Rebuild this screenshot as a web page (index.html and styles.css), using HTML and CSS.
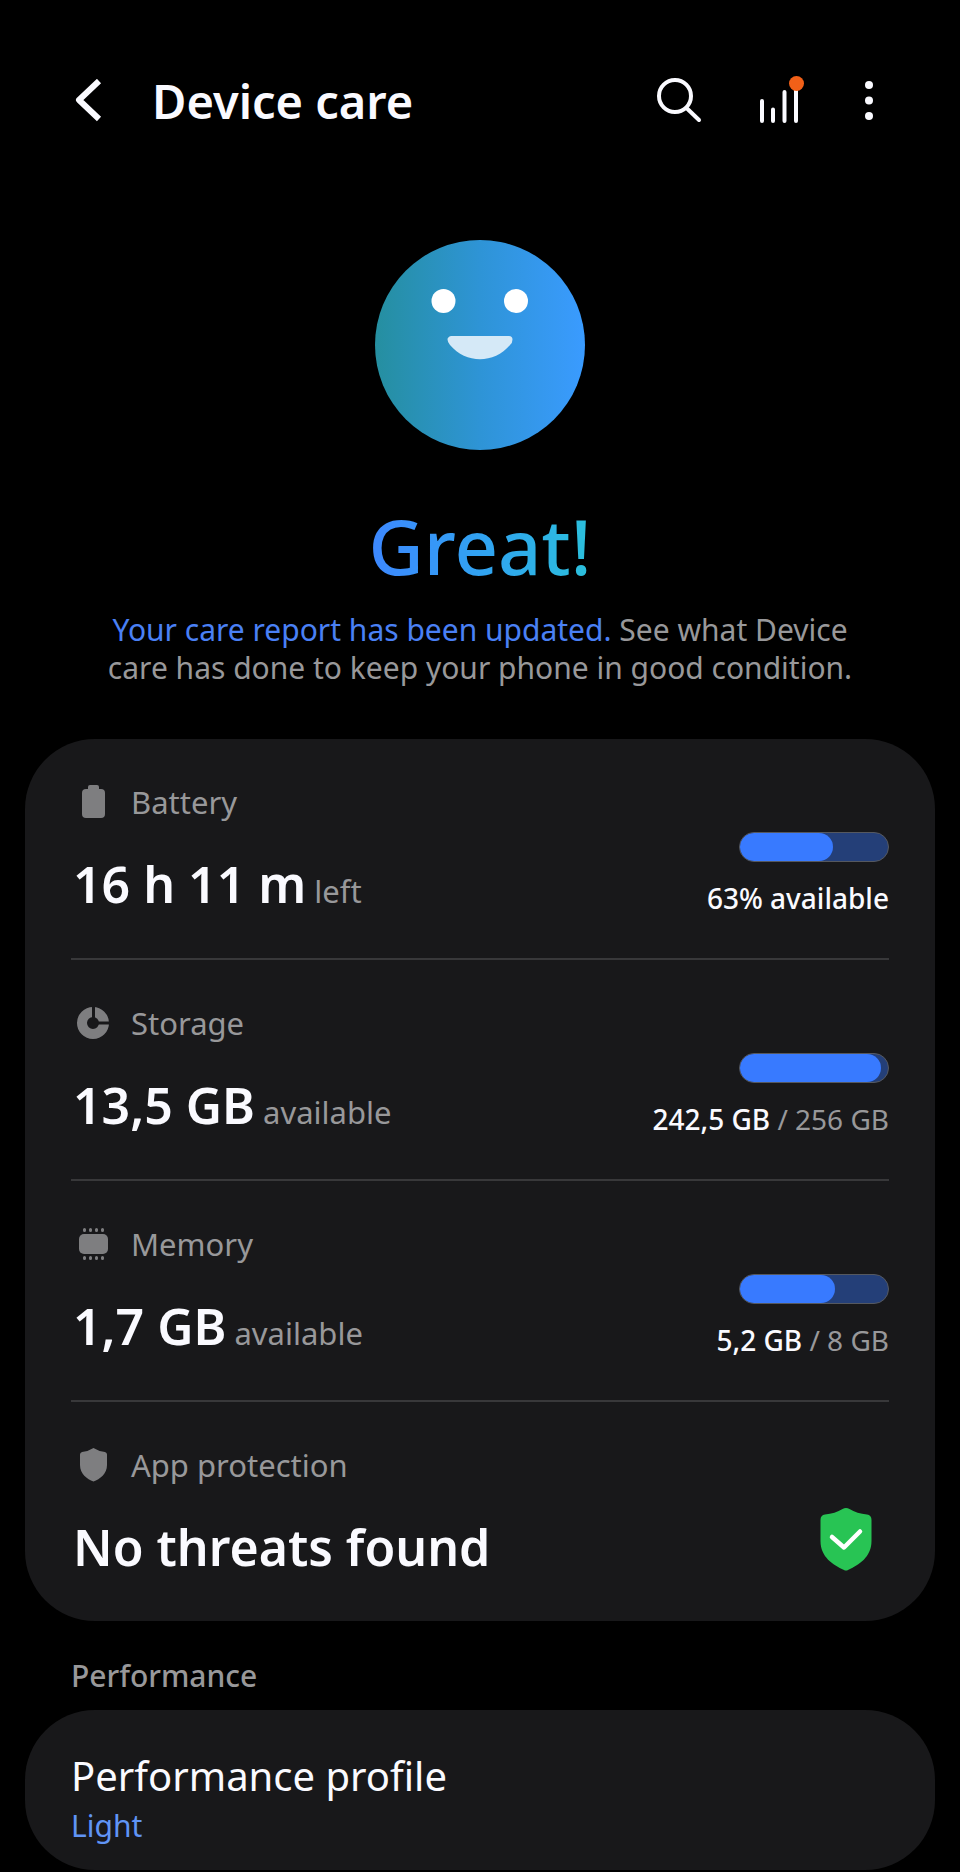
FILE: index.html
```html
<!DOCTYPE html>
<html lang="en">
<head>
<meta charset="UTF-8">
<meta name="viewport" content="width=device-width, initial-scale=1">
<title>Device care</title>
<link rel="stylesheet" href="styles.css">
</head>
<body>
<header class="topbar">
  <button class="icon-btn back" aria-label="Back">
    <svg width="30" height="44" viewBox="0 0 30 44" fill="none" stroke="#fafaff" stroke-width="6">
      <path d="M25 2 5 21 25 40" stroke-linejoin="round"/>
    </svg>
  </button>
  <h1 class="title">Device care</h1>
  <button class="icon-btn" aria-label="Search">
    <svg width="46" height="46" viewBox="0 0 46 46" fill="none" stroke="#fafaff" stroke-width="4" stroke-linecap="round">
      <circle cx="19" cy="18" r="16"/>
      <path d="M30.500 30 43 42"/>
    </svg>
  </button>
  <button class="icon-btn" aria-label="Care report">
    <svg width="46" height="50" viewBox="0 0 46 50" fill="none" stroke="#fafaff" stroke-width="4" stroke-linecap="round">
      <path d="M4 25V45M15 33.500V45M26.500 16V45M38 13V45"/>
      <circle cx="38.500" cy="7.500" r="7.500" fill="#f26018" stroke="none"/>
    </svg>
  </button>
  <button class="icon-btn more" aria-label="More options">
    <svg width="10" height="42" viewBox="0 0 10 42" fill="#fafaff">
      <circle cx="5" cy="5" r="4"/><circle cx="5" cy="20.500" r="4"/><circle cx="5" cy="36" r="4"/>
    </svg>
  </button>
</header>

<main>
  <section class="status">
    <svg class="face" width="210" height="210" viewBox="0 0 210 210">
      <defs>
        <linearGradient id="faceFill">
          <stop offset="0" stop-color="#258fa0"/>
          <stop offset=".5" stop-color="#2e94d6"/>
          <stop offset="1" stop-color="#3a9bff"/>
        </linearGradient>
      </defs>
      <circle cx="105" cy="105" r="105" fill="url(#faceFill)"/>
      <circle cx="68.500" cy="61" r="12" fill="#fff"/>
      <circle cx="141" cy="61" r="12" fill="#fff"/>
      <path d="M76 96H134Q137.500 96 137.500 99.500T135 105C119 124 91 124 75 105Q72.500 102 72.500 99.500T76 96Z" fill="#d5e9f7"/>
    </svg>
    <h2 class="grade">Great!</h2>
    <p class="report"><a href="#report">Your care report has been updated.</a> See what Device care has done to keep your phone in good condition.</p>
  </section>

  <section class="card">
    <div class="row">
      <div class="info">
        <h3 class="label">
          <svg class="label-icon" width="36" height="36" viewBox="0 0 36 36" fill="#7e7e80">
            <rect x="7" y="5" width="23" height="29" rx="4"/>
            <rect x="13" y="1" width="11" height="6" rx="2"/>
          </svg>
          Battery
        </h3>
        <p class="value">16 h 11 m <small>left</small></p>
      </div>
      <div class="usage">
        <div class="bar"><div class="fill" style="width: 63%"></div></div>
        <p class="caption">63% available</p>
      </div>
    </div>

    <div class="row">
      <div class="info">
        <h3 class="label">
          <svg class="label-icon" width="36" height="36" viewBox="0 0 36 36">
            <circle cx="18" cy="18" r="11" fill="none" stroke="#7e7e80" stroke-width="10"/>
            <path d="M18.500 0V18H36" fill="none" stroke="#18181a" stroke-width="3"/>
          </svg>
          Storage
        </h3>
        <p class="value">13,5 GB <small>available</small></p>
      </div>
      <div class="usage">
        <div class="bar"><div class="fill" style="width: 95%"></div></div>
        <p class="caption">242,5 GB <span>/ 256 GB</span></p>
      </div>
    </div>

    <div class="row">
      <div class="info">
        <h3 class="label">
          <svg class="label-icon" width="36" height="36" viewBox="0 0 36 36" fill="#7e7e80">
            <rect x="4" y="8" width="29" height="20" rx="5"/>
            <path d="M9.500 3.500V4.500M15.500 3.500V4.500M21.500 3.500V4.500M27.500 3.500V4.500M9.500 31.500V32.500M15.500 31.500V32.500M21.500 31.500V32.500M27.500 31.500V32.500" stroke="#7e7e80" stroke-width="3" stroke-linecap="round"/>
          </svg>
          Memory
        </h3>
        <p class="value">1,7 GB <small>available</small></p>
      </div>
      <div class="usage">
        <div class="bar"><div class="fill" style="width: 64%"></div></div>
        <p class="caption">5,2 GB <span>/ 8 GB</span></p>
      </div>
    </div>

    <div class="row">
      <div class="info">
        <h3 class="label">
          <svg class="label-icon" width="36" height="36" viewBox="0 0 36 36" fill="#7e7e80">
            <path d="M18.500 1Q24 4.500 30 5Q32 5.500 32 7.500V18C32 27 25 32 18.500 34.500C12 32 5 27 5 18V7.500Q5 5.500 7 5Q13 4.500 18.500 1Z"/>
          </svg>
          App protection
        </h3>
        <p class="value">No threats found</p>
      </div>
      <svg class="shield" width="52" height="64" viewBox="0 0 52 64">
        <path d="M22.500 2Q26 0 29.500 2Q37 6.500 47 7.500Q51.500 8 51.500 13V34C51.500 50 39 58 28 63Q26 64 24 63C13 58 .5 50 .5 34V13Q.5 8 5 7.500Q15 6.500 22.500 2Z" fill="#28c454"/>
        <path d="M12 30 24 40.500 40 24.500" fill="none" stroke="#fff" stroke-width="4.500" stroke-linecap="round" stroke-linejoin="round"/>
      </svg>
    </div>
  </section>

  <h2 class="section-title">Performance</h2>
  <a class="card profile" href="#profile">
    <span class="profile-name">Performance profile</span>
    <span class="profile-value">Light</span>
  </a>
</main>
</body>
</html>
```
FILE: styles.css
```css
* {
  box-sizing: border-box;
}
body {
  margin: 0;
  background: #000;
  color: #fafaff;
  font-family: "Noto Sans", "Open Sans", sans-serif;
}
h1, h2, h3, p {
  margin: 0;
}
svg {
  display: block;
}

/* top bar */
.topbar {
  display: flex;
  align-items: center;
  gap: 56px;
  padding: 60px 86px 58px 74px;
}
.icon-btn {
  padding: 0;
  border: 0;
  background: none;
}
.back {
  margin-right: -8px;
}
.more {
  margin-left: 4px;
}
.title {
  flex: 1;
  font-size: 47px;
  line-height: 82px;
  font-weight: 600;
}

/* overall status */
.status {
  display: flex;
  flex-direction: column;
  align-items: center;
  padding: 40px 40px 52px;
}
.grade {
  margin-top: 44px;
  font-size: 76px;
  line-height: 104px;
  font-weight: 500;
  background: linear-gradient(90deg, #3d87ff, #30a5f0 55%, #2bc0dc);
  -webkit-background-clip: text;
  background-clip: text;
  color: transparent;
}
.report {
  max-width: 780px;
  margin-top: 13px;
  color: #98989a;
  font-size: 30px;
  line-height: 38px;
  text-align: center;
}
.report a {
  color: #4a80f5;
  text-decoration: none;
}

/* cards */
.card {
  display: block;
  margin: 0 25px;
  padding: 0 46px;
  border-radius: 70px;
  background: #18181a;
}
.row {
  display: flex;
  align-items: flex-end;
  justify-content: space-between;
  padding: 43px 0 40px;
  border-bottom: 2px solid #38383a;
}
.row:last-child {
  border-bottom: 0;
}
.label {
  display: flex;
  align-items: center;
  gap: 20px;
  padding-left: 4px;
  color: #98989a;
  font-size: 31px;
  line-height: 40px;
  font-weight: 400;
}
.value {
  display: flex;
  align-items: baseline;
  gap: 8px;
  margin-top: 28px;
  padding-left: 2px;
  font-size: 50px;
  line-height: 68px;
  font-weight: 600;
}
.value small {
  color: #98989a;
  font-size: 31px;
  line-height: 40px;
  font-weight: 400;
}
.usage {
  display: flex;
  flex-direction: column;
  align-items: flex-end;
  gap: 16px;
}
.bar {
  width: 150px;
  height: 30px;
  border: 1px solid #55585f;
  border-radius: 15px;
  background: #243f78;
  overflow: hidden;
}
.fill {
  height: 100%;
  border-radius: 14px;
  background: #387aff;
}
.caption {
  font-size: 28px;
  line-height: 40px;
  font-weight: 500;
}
.caption span {
  color: #98989a;
  font-weight: 400;
}
.shield {
  margin: 0 17px 10px;
}

/* performance */
.section-title {
  margin: 35px 71px 14px;
  color: #98989a;
  font-size: 30px;
  line-height: 40px;
  font-weight: 500;
}
.profile {
  display: flex;
  flex-direction: column;
  gap: 3px;
  padding-top: 39px;
  padding-bottom: 24px;
  color: #fafaff;
  text-decoration: none;
}
.profile-name {
  font-size: 40px;
  line-height: 54px;
}
.profile-value {
  color: #6094f5;
  font-size: 30px;
  line-height: 40px;
}
```
